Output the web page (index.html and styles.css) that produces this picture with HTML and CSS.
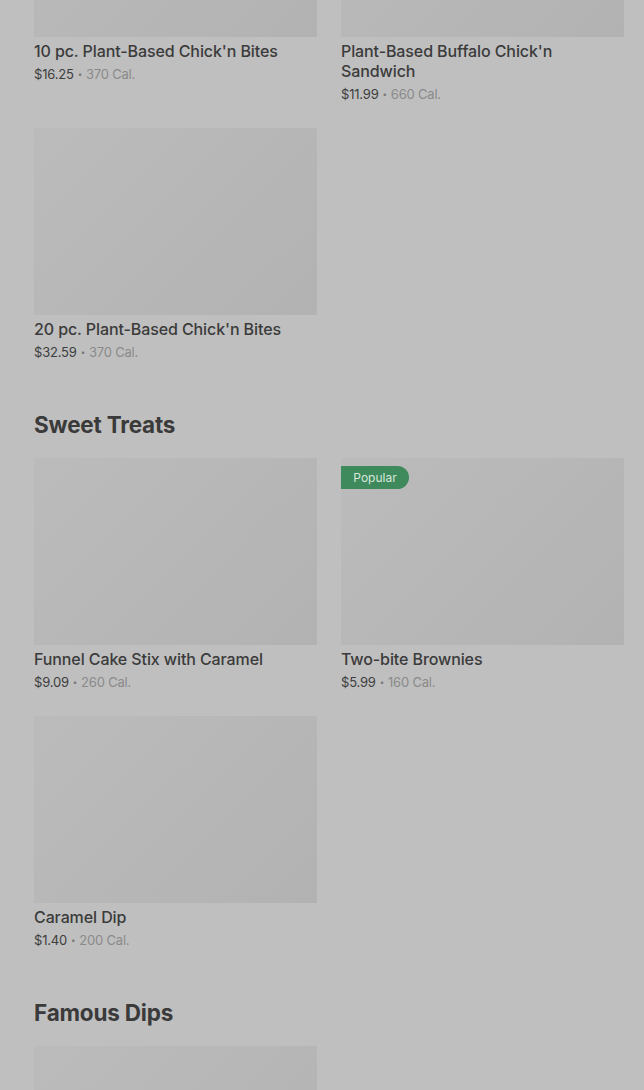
FILE: index.html
```html
<!DOCTYPE html>
<html>
<head>
<meta charset="utf-8">
<link rel="stylesheet" href="styles.css">
</head>
<body>
<main class="page">
  <section class="section">
    <div class="grid">
      <div class="item">
        <div class="thumb"></div>
        <div class="title">10 pc. Plant-Based Chick'n Bites</div>
        <div class="meta"><span class="price">$16.25</span><span class="dot">•</span><span class="cal">370 Cal.</span></div>
      </div>
      <div class="item">
        <div class="thumb"></div>
        <div class="title">Plant-Based Buffalo Chick'n Sandwich</div>
        <div class="meta"><span class="price">$11.99</span><span class="dot">•</span><span class="cal">660 Cal.</span></div>
      </div>
      <div class="item">
        <div class="thumb"></div>
        <div class="title">20 pc. Plant-Based Chick'n Bites</div>
        <div class="meta"><span class="price">$32.59</span><span class="dot">•</span><span class="cal">370 Cal.</span></div>
      </div>
    </div>
  </section>
  <section class="section">
    <h2 class="heading">Sweet Treats</h2>
    <div class="grid">
      <div class="item">
        <div class="thumb"></div>
        <div class="title">Funnel Cake Stix with Caramel</div>
        <div class="meta"><span class="price">$9.09</span><span class="dot">•</span><span class="cal">260 Cal.</span></div>
      </div>
      <div class="item">
        <div class="thumb"><span class="badge">Popular</span></div>
        <div class="title">Two-bite Brownies</div>
        <div class="meta"><span class="price">$5.99</span><span class="dot">•</span><span class="cal">160 Cal.</span></div>
      </div>
      <div class="item">
        <div class="thumb"></div>
        <div class="title">Caramel Dip</div>
        <div class="meta"><span class="price">$1.40</span><span class="dot">•</span><span class="cal">200 Cal.</span></div>
      </div>
    </div>
  </section>
  <section class="section">
    <h2 class="heading">Famous Dips</h2>
    <div class="grid">
      <div class="item">
        <div class="thumb"></div>
      </div>
    </div>
  </section>
</main>
</body>
</html>
```
FILE: styles.css
```css
html, body {
  margin: 0;
  padding: 0;
  background: #bfbfbf;
  overflow: hidden;
}
body {
  font-family: Inter, "Noto Sans", sans-serif;
  color: #3b3b3b;
}
.page {
  margin-top: -150px;
  padding: 0 20px 0 34px;
}
.section {
  margin-bottom: 49px;
}
.heading {
  margin: 0 0 19px;
  font-size: 22.5px;
  line-height: 28px;
  font-weight: 700;
  letter-spacing: -0.2px;
  color: #3a3a3a;
}
.grid {
  display: grid;
  grid-template-columns: 283px 283px;
  column-gap: 24px;
  row-gap: 24px;
  align-items: start;
}
.thumb {
  position: relative;
  height: 187px;
  background: linear-gradient(135deg, #bbbbbb 0%, #b7b7b7 50%, #b2b2b2 100%);
  margin-bottom: 4px;
}
.badge {
  position: absolute;
  left: 0;
  top: 8px;
  height: 23px;
  line-height: 23px;
  width: 68px;
  text-align: center;
  background: #3e8a5c;
  color: #d8e6dc;
  font-size: 12px;
  border-radius: 0 12px 12px 0;
}
.title {
  font-size: 16px;
  line-height: 20px;
  font-weight: 500;
  letter-spacing: -0.1px;
  color: #3b3b3b;
}
.meta {
  display: flex;
  align-items: center;
  gap: 4px;
  height: 20px;
  margin-top: 3px;
  font-size: 13px;
  line-height: 20px;
  letter-spacing: -0.2px;
}
.price {
  color: #3d3d3d;
}
.dot {
  color: #777;
  font-size: 8px;
  line-height: 20px;
}
.cal {
  color: #8a8a8a;
}
```
